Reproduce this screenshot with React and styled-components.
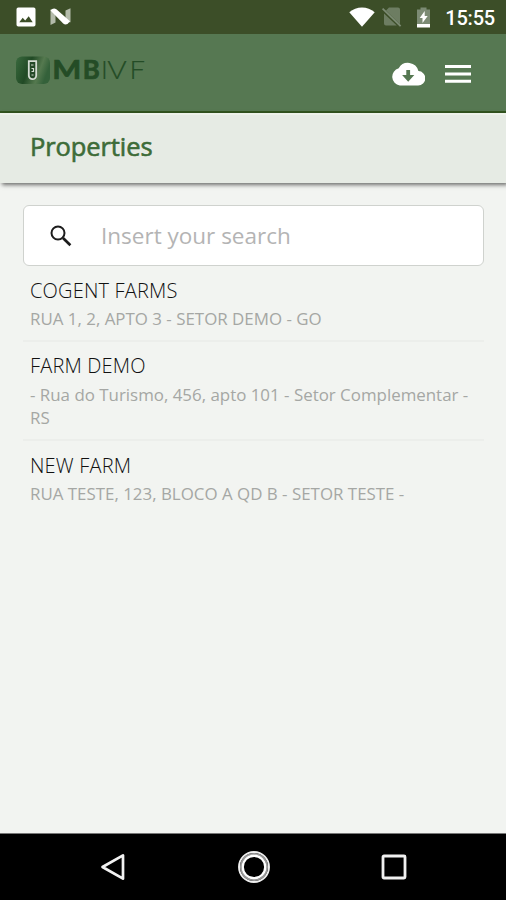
import React, { useState } from 'react';
import styled, { createGlobalStyle } from 'styled-components';

const properties = [
    { name: 'COGENT FARMS', address: 'RUA 1, 2, APTO 3 - SETOR DEMO - GO' },
    { name: 'FARM DEMO', address: '- Rua do Turismo, 456, apto 101 - Setor Complementar - RS' },
    { name: 'NEW FARM', address: 'RUA TESTE, 123, BLOCO A QD B - SETOR TESTE -' },
];

const Logo = () => (
    <svg width="136" height="36" viewBox="0 0 136 36" role="img" aria-label="MBIVF">
        <defs>
            <linearGradient id="badge" x1="0" y1="0" x2="1" y2="0.3">
                <stop offset="0" stopColor="#3a6a3e" />
                <stop offset="0.45" stopColor="#214a25" />
                <stop offset="0.78" stopColor="#55794f" />
                <stop offset="1" stopColor="#34613a" />
            </linearGradient>
        </defs>
        <rect x="6" y="5.5" width="34" height="27.5" rx="6" fill="url(#badge)" />
        <path d="M18.8 10.2h7.4v14.2a3.7 3.7 0 0 1-7.4 0z" fill="#244927" stroke="#d5ddd3" strokeWidth="1.8" />
        <path d="M21 14h2.5M21.5 17.5h2v3h-2M21.5 24h2" fill="none" stroke="#d5ddd3" strokeWidth="1.2" />
        <LogoText x="42.3" y="28.3" $weight="700" textLength="29" lengthAdjust="spacingAndGlyphs">M</LogoText>
        <LogoText x="72.7" y="28.3" $weight="700" textLength="17" lengthAdjust="spacingAndGlyphs">B</LogoText>
        <LogoText x="91" y="28.3" $weight="300">I</LogoText>
        <LogoText x="97.3" y="28.3" $weight="300" textLength="19.5" lengthAdjust="spacingAndGlyphs">V</LogoText>
        <LogoText x="119.5" y="28.3" $weight="300" textLength="15.5" lengthAdjust="spacingAndGlyphs">F</LogoText>
    </svg>
);

const App = () => {
    const [search, setSearch] = useState('');

    return (
        <>
            <GlobalStyle />
            <Screen>
                <StatusBar>
                    <StatusIcons $gap="14px">
                        <svg width="20" height="20" viewBox="0 0 20 20">
                            <path fill="#fff" fillRule="evenodd" d="M2.3.5h15.4q1.8 0 1.8 1.8v15.4q0 1.8-1.8 1.8H2.3q-1.8 0-1.8-1.8V2.3Q.5.5 2.3.5zM3.3 15.3h13.4l-4-6-3.5 4.2-2.5-2.8z" />
                        </svg>
                        <svg width="22" height="20" viewBox="0 0 22 20">
                            <path fill="#b3bbaa" d="M.5 2.5h5v13l-5 2.5zM15.5 3.5l5-2.2v14h-5z" />
                            <path fill="#fff" d="M.5 3.4Q3.2.3 6.4 2.2L20 14.2q-3.4 5-6.8 2.4z" />
                        </svg>
                    </StatusIcons>
                    <StatusIcons>
                        <svg width="26" height="20" viewBox="0 0 26 20">
                            <path fill="#fff" d="M.3 5.2Q5.8.4 13 .4t12.7 4.8L13 19.8z" />
                        </svg>
                        <svg width="41" height="22" viewBox="-2 0 41 22">
                            <path fill="#6d7d62" d="M12 1.5h9q2 0 2 2v14.7L9 4.4zM7 7.5l12.8 12H9q-2 0-2-2z" />
                            <path d="m5.6 2.6 18 17.6" stroke="#7c8b74" strokeWidth="1.8" />
                        </svg>
                        <svg width="15" height="21" viewBox="0 0 15 21">
                            <path fill="#7c8b74" d="M4.5.5h6v2H14v15H1v-15h3.5z" />
                            <path fill="#fff" d="M8.7 4v5h3L6.5 16v-5H3.7zM1 17h13v3.5H1z" />
                        </svg>
                        <Clock>15:55</Clock>
                    </StatusIcons>
                </StatusBar>
                <Header>
                    <Logo />
                    <HeaderActions>
                        <IconButton aria-label="Download">
                            <svg width="34" height="24" viewBox="0 0 34 24">
                                <path fill="#fff" d="M27.4 9.1A10.7 10.7 0 0 0 7.7 6.3 8.8 8.8 0 0 0 8.8 23.5h18.1a7.2 7.2 0 0 0 .5-14.4z" />
                                <path fill="#567852" d="M15.3 8h3.8v5h4.2l-6.1 6.8-6.1-6.8h4.2z" />
                            </svg>
                        </IconButton>
                        <IconButton aria-label="Menu">
                            <svg width="26" height="20" viewBox="0 0 26 20">
                                <path fill="#fff" d="M0 1h26v3H0zM0 8.4h26v3H0zM0 15.8h26v3H0z" />
                            </svg>
                        </IconButton>
                    </HeaderActions>
                </Header>
                <TitleBar>
                    <Title>Properties</Title>
                </TitleBar>
                <Content>
                    <SearchBox>
                        <svg width="22" height="22" viewBox="0 0 22 22" fill="none" stroke="#1c1c1c">
                            <circle cx="8" cy="8" r="6.5" strokeWidth="2" />
                            <path d="m13 13 7.4 7.2" strokeWidth="2.7" />
                        </svg>
                        <SearchInput
                            placeholder="Insert your search"
                            value={search}
                            onChange={(e) => setSearch(e.target.value)}
                        />
                    </SearchBox>
                    <List>
                        {properties.map((item) => (
                            <Item key={item.name}>
                                <Name>{item.name}</Name>
                                <Address>{item.address}</Address>
                            </Item>
                        ))}
                    </List>
                </Content>
                <NavBar>
                    <svg width="26" height="28" viewBox="0 0 26 28">
                        <path d="M23 2.3v23.4L2.5 14z" fill="none" stroke="#f2f2f2" strokeWidth="2.7" strokeLinejoin="round" />
                    </svg>
                    <svg width="34" height="34" viewBox="0 0 34 34" fill="none">
                        <circle cx="17" cy="17" r="15" stroke="#f0f0f0" strokeWidth="1.9" />
                        <circle cx="17" cy="17" r="13.2" stroke="#999" strokeWidth="1.7" />
                        <circle cx="17" cy="17" r="11.3" stroke="#fff" strokeWidth="2.4" />
                    </svg>
                    <svg width="26" height="26" viewBox="0 0 26 26">
                        <rect x="2" y="2" width="22" height="22" rx="1" fill="none" stroke="#f0f0f0" strokeWidth="2.8" />
                    </svg>
                </NavBar>
            </Screen>
        </>
    );
};

const GlobalStyle = createGlobalStyle`
  * {
    box-sizing: border-box;
  }

  body {
    margin: 0;
    font-family: 'Open Sans', 'Noto Sans', sans-serif;
  }

  svg {
    display: block;
    flex-shrink: 0;
  }
`;

const Screen = styled.div`
  display: flex;
  flex-direction: column;
  width: 100%;
  height: 100vh;
  background: #f2f4f1;
`;

const StatusBar = styled.div`
  display: flex;
  justify-content: space-between;
  align-items: center;
  height: 34px;
  padding: 0 11px 0 16px;
  background: #3c4e28;
`;

const StatusIcons = styled.div`
  display: flex;
  align-items: center;
  gap: ${({ $gap }) => $gap || '0'};
`;

const Clock = styled.span`
  margin: 2px 0 0 14px;
  font-family: Roboto, sans-serif;
  font-size: 20px;
  font-weight: 500;
  line-height: 34px;
  letter-spacing: -0.2px;
  color: #fff;
`;

const Header = styled.header`
  display: flex;
  justify-content: space-between;
  align-items: flex-start;
  height: 79px;
  padding: 17px 35px 0 10px;
  background: #567852;
  border-bottom: 2px solid #33561f;
`;

const LogoText = styled.text`
  font-family: Lato, sans-serif;
  font-size: 26px;
  font-weight: ${({ $weight }) => $weight};
  fill: #244c26;
  stroke: #244c26;
  stroke-width: ${({ $weight }) => ($weight === '700' ? '0.7px' : '0.2px')};
`;

const HeaderActions = styled.div`
  display: flex;
  align-items: center;
  gap: 20px;
  height: 45px;
`;

const IconButton = styled.button`
  padding: 0;
  border: 0;
  background: none;
  cursor: pointer;
`;

const TitleBar = styled.div`
  height: 70px;
  padding: 14px 30px 0;
  border-top: 2px solid #eef2ea;
  background: #e6ebe4;
  box-shadow: 2px 2px 4px rgb(0 0 0 / 55%);
`;

const Title = styled.h1`
  margin: 0;
  font-size: 25.5px;
  font-weight: 400;
  line-height: 34px;
  letter-spacing: -0.1px;
  color: #3d6c38;
  -webkit-text-stroke: 0.6px #3d6c38;
`;

const Content = styled.main`
  flex: 1;
  padding: 22px 22px 0 23px;
`;

const SearchBox = styled.label`
  display: flex;
  align-items: center;
  gap: 29px;
  height: 61px;
  padding: 0 26px;
  border: 1px solid #cfd2ce;
  border-radius: 6px;
  background: #fff;
`;

const SearchInput = styled.input`
  flex: 1;
  min-width: 0;
  padding: 0;
  border: 0;
  outline: 0;
  background: none;
  font-family: inherit;
  font-size: 22.5px;
  color: #333;

  &::placeholder {
    color: #b4b4b4;
  }
`;

const List = styled.ul`
  margin: 0;
  padding: 0;
  list-style: none;
`;

const Item = styled.li`
  padding: 9.5px 7px;

  & + & {
    border-top: 2px solid #eceeeb;
  }
`;

const Name = styled.div`
  margin-bottom: 2.3px;
  font-size: 20px;
  font-weight: 300;
  line-height: 29px;
  letter-spacing: 0.18px;
  color: #111;
`;

const Address = styled.div`
  font-size: 16.9px;
  line-height: 23.6px;
  color: #a5a7a4;
`;

const NavBar = styled.nav`
  display: flex;
  justify-content: space-between;
  align-items: center;
  height: 67px;
  padding: 0 99px 0 100px;
  border-top: 1px solid #777;
  background: #000;
`;

export default App;
